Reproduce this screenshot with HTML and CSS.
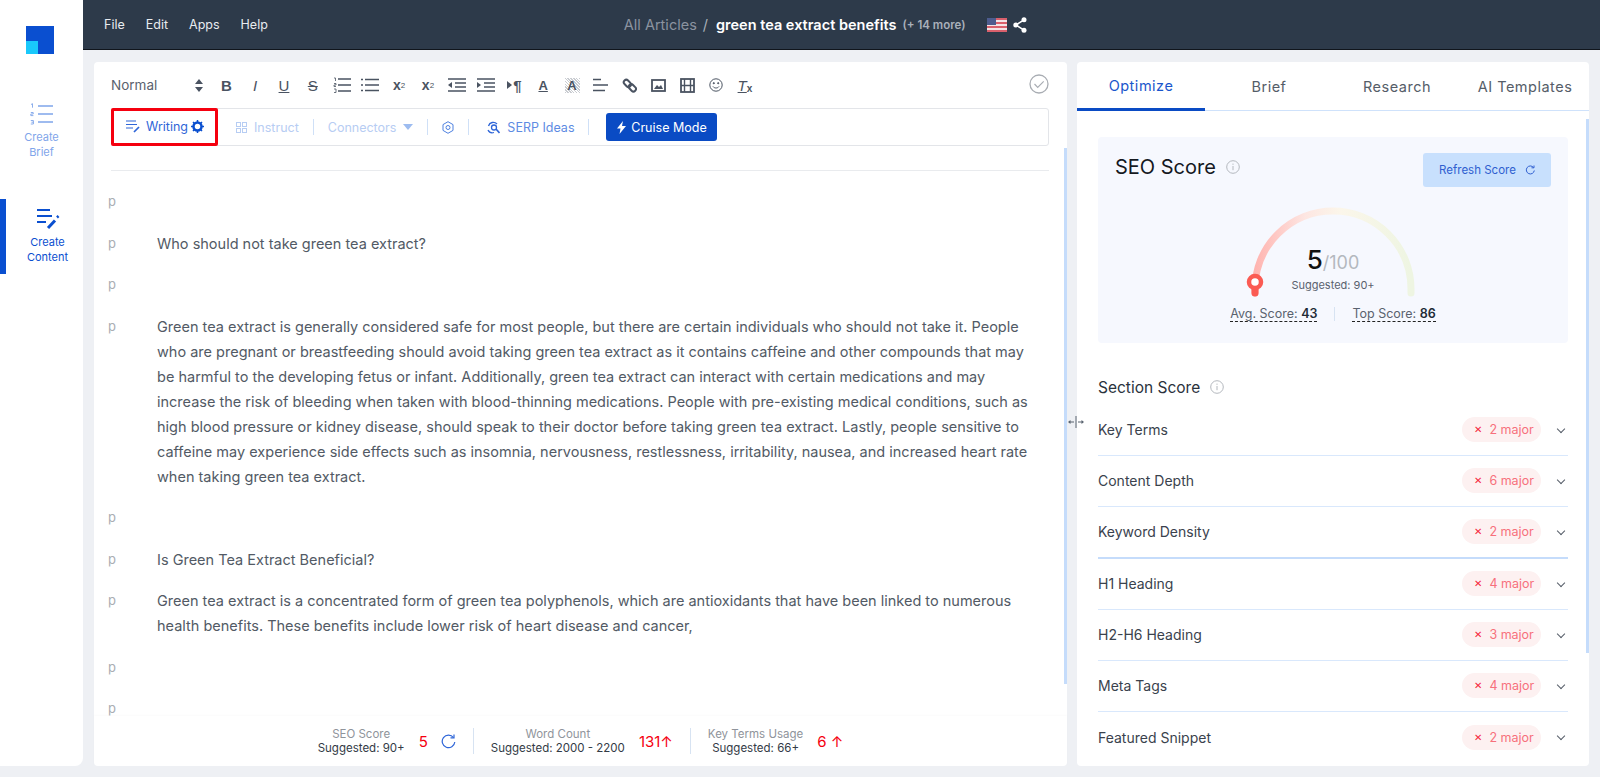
FILE: index.html
```html
<!DOCTYPE html>
<html>
	<head>
		<meta charset="UTF-8">
		<title>green tea extract benefits</title>
		<link rel="stylesheet" href="styles.css">
	</head>
	<body>
		<aside class="side">
			<svg class="logo" width="28" height="28" viewBox="0 0 28 28"><path d="M0 0h28v28H12V15H0z" fill="#0a4fd0"/><rect y="15" width="12" height="13" fill="#19c8fb"/></svg>
			<a class="side-item brief">
				<svg width="24" height="22" viewBox="0 0 24 22" fill="none" stroke="#7fa5ea" stroke-width="1.6"><path d="M8 3h15M8 11h15M8 19h15"/><path d="M1 1.5l1.5-.8v4M.8 9.5h2.4v1.5H.8v1.6h2.6M.8 17.5h2.6v3.5H.8M1.4 19.2h2" stroke-width=".9"/></svg>
				<span>Create<br>Brief</span>
			</a>
			<a class="side-item content">
				<svg width="24" height="22" viewBox="0 0 24 22" fill="none" stroke="#0a4fd0" stroke-width="1.8"><path d="M1 2h13M1 8h15M1 14h9"/><path d="M12 20l7-7.500" stroke-width="3"/><path d="M21 9.500l1.500-1.500" stroke-width="2.500"/></svg>
				<span>Create<br>Content</span>
			</a>
		</aside>
		<div class="main">
			<header class="top">
				<nav class="menu"><a>File</a><a>Edit</a><a>Apps</a><a>Help</a></nav>
				<div class="crumb">
					<span class="all">All Articles</span><span class="slash">/</span><b>green tea extract benefits</b><span class="more">(+ 14 more)</span>
					<svg class="flag" width="20" height="14" viewBox="0 0 20 14"><rect width="20" height="14" fill="#f3e4e6"/><path d="M0 1h20M0 5h20M0 9h20M0 13h20" stroke="#d9606c" stroke-width="1.900"/><rect width="9" height="7" fill="#4d5c8e"/></svg>
					<svg class="share" width="14" height="16" viewBox="0 0 14 16" fill="#fff"><circle cx="11" cy="2.800" r="2.500"/><circle cx="11" cy="13.200" r="2.500"/><circle cx="2.800" cy="8" r="2.500"/><path d="M2.800 8L11 2.800M2.800 8L11 13.200" stroke="#fff" stroke-width="1.500"/></svg>
				</div>
			</header>
			<div class="wrap">
				<section class="editor">
					<div class="tools">
						<span class="normal">Normal</span>
						<svg class="updown" width="8" height="13" viewBox="0 0 8 13" fill="#4a5361"><path d="M4 0l4 5H0zM4 13l4-5H0z"/></svg>
						<span class="tb t-b">B</span>
						<span class="tb t-i">I</span>
						<span class="tb t-u">U</span>
						<span class="tb t-s">S</span>
						<span class="tb gap"><svg width="18" height="16" viewBox="0 0 18 16" fill="none" stroke="#4a5361" stroke-width="1.700"><path d="M5 2h13M5 8h13M5 14h13"/><path d="M1 1h1.500v3M1 6.500h2v1.500H1v1.500h2M1 12h2v3.500H1" stroke-width=".8"/></svg></span>
						<span class="tb"><svg width="18" height="14" viewBox="0 0 18 14" fill="none" stroke="#4a5361" stroke-width="1.700"><path d="M4 1.500h14M4 7h14M4 12.500h14M0 1.500h2M0 7h2M0 12.500h2"/></svg></span>
						<span class="tb t-x">x<sub>2</sub></span>
						<span class="tb t-x">x<sup>2</sup></span>
						<span class="tb gap"><svg width="18" height="14" viewBox="0 0 18 14" fill="none" stroke="#4a5361" stroke-width="1.700"><path d="M0 1h18M7 5h11M7 9h11M0 13h18"/><path d="M4 4v6L0 7z" fill="#4a5361" stroke="none"/></svg></span>
						<span class="tb"><svg width="18" height="14" viewBox="0 0 18 14" fill="none" stroke="#4a5361" stroke-width="1.700"><path d="M0 1h18M7 5h11M7 9h11M0 13h18"/><path d="M0 4v6l4-3z" fill="#4a5361" stroke="none"/></svg></span>
						<span class="tb gap t-p"><svg width="5" height="8" viewBox="0 0 5 8" fill="#4a5361"><path d="M0 0l5 4-5 4z"/></svg>¶</span>
						<span class="tb gap t-a">A</span>
						<span class="tb t-bg">A</span>
						<span class="tb"><svg width="15" height="14" viewBox="0 0 15 14" fill="none" stroke="#4a5361" stroke-width="1.700"><path d="M0 1.500h8M0 7h15M0 12.500h12"/></svg></span>
						<span class="tb"><svg width="15" height="15" viewBox="0 0 15 15" fill="none" stroke="#4a5361" stroke-width="2"><rect x="-3.500" y="-2.500" width="8" height="5" rx="2.500" transform="translate(5 5) rotate(45)"/><rect x="-3.500" y="-2.500" width="8" height="5" rx="2.500" transform="translate(10 9.500) rotate(45)"/></svg></span>
						<span class="tb"><svg width="15" height="13" viewBox="0 0 15 13"><rect x="1" y="1" width="13" height="11" fill="none" stroke="#4a5361" stroke-width="1.800"/><path d="M3 10l3-4 2 2 2-2 2 4z" fill="#4a5361"/></svg></span>
						<span class="tb"><svg width="15" height="15" viewBox="0 0 15 15" fill="none" stroke="#4a5361" stroke-width="1.800"><rect x="1" y="1" width="13" height="13"/><path d="M4.500 1v13M10.500 1v13M1 7.500h13" stroke-width="1.400"/></svg></span>
						<span class="tb"><svg width="14" height="14" viewBox="0 0 14 14" fill="none" stroke="#4a5361"><circle cx="7" cy="7" r="6.200"/><path d="M4 8.500c1.500 2 4.500 2 6 0"/><circle cx="4.800" cy="5.200" r=".6" fill="#4a5361"/><circle cx="9.200" cy="5.200" r=".6" fill="#4a5361"/></svg></span>
						<span class="tb t-clear"><i>T</i><small>x</small></span>
						<svg class="done" width="20" height="20" viewBox="0 0 20 20" fill="none" stroke="#a9adb3" stroke-width="1.300"><circle cx="10" cy="10" r="9"/><path d="M5.500 10l3.200 3.300 6-6" stroke-width="1.200"/></svg>
					</div>
					<div class="modes">
						<div class="writing">
							<svg width="15" height="13" viewBox="0 0 15 13" fill="none" stroke="#2f66d8" stroke-width="1.200"><path d="M0 1h10M0 4.500h11M0 8h7"/><path d="M8 12l5-5" stroke-width="1.700"/></svg>
							<span>Writing</span>
							<svg width="13" height="13" viewBox="0 0 13 13" fill="none" stroke="#0a4fd0"><circle cx="6.500" cy="6.500" r="4" stroke-width="2.500"/><path d="M6.500 0v2M6.500 11v2M0 6.500h2M11 6.500h2M2 2l1.400 1.400M9.600 9.600L11 11M11 2L9.600 3.400M3.400 9.600L2 11" stroke-width="1.500"/></svg>
						</div>
						<span class="mode pale first"><svg width="11" height="11" viewBox="0 0 11 11" fill="none" stroke="#b7cdf3"><rect x=".5" y=".5" width="4" height="4"/><rect x="6.500" y=".5" width="4" height="4"/><rect x=".5" y="6.500" width="4" height="4"/><rect x="6.500" y="6.500" width="4" height="4"/></svg>Instruct</span>
						<i class="bar"></i>
						<span class="mode pale">Connectors<svg width="10" height="6" viewBox="0 0 10 6" fill="#9dbcf0"><path d="M0 0h10L5 6z"/></svg></span>
						<i class="bar"></i>
						<svg class="cog" width="12" height="13" viewBox="0 0 12 13" fill="none" stroke="#4d80e0"><path d="M6 .7l5 2.900v5.800l-5 2.900-5-2.900V3.600z"/><circle cx="6" cy="6.500" r="2"/></svg>
						<i class="bar"></i>
						<span class="mode serp"><svg width="13" height="13" viewBox="0 0 13 13" fill="none" stroke="#2f66d8" stroke-width="1.300"><path d="M10 3a5 5 0 0 0-8.500 2M1 9a5 5 0 0 0 6 2.500"/><path d="M9 8l3.500 4" stroke-width="1.600"/><circle cx="7" cy="6.500" r="2.500"/></svg>SERP Ideas</span>
						<i class="bar"></i>
						<a class="cruise"><svg width="9" height="13" viewBox="0 0 9 13" fill="#fff"><path d="M6 0L0 7.500h3.500L2.500 13 9 5H5z"/></svg>Cruise Mode</a>
					</div>
					<div class="rule"></div>
					<div class="doc">
						<div class="para"><span class="tag">p</span><p></p></div>
						<div class="para"><span class="tag">p</span><p>Who should not take green tea extract?</p></div>
						<div class="para"><span class="tag">p</span><p></p></div>
						<div class="para"><span class="tag">p</span><p>Green tea extract is generally considered safe for most people, but there are certain individuals who should not take it. People who are pregnant or breastfeeding should avoid taking green tea extract as it contains caffeine and other compounds that may be harmful to the developing fetus or infant. Additionally, green tea extract can interact with certain medications and may increase the risk of bleeding when taken with blood-thinning medications. People with pre-existing medical conditions, such as high blood pressure or kidney disease, should speak to their doctor before taking green tea extract. Lastly, people sensitive to caffeine may experience side effects such as insomnia, nervousness, restlessness, irritability, nausea, and increased heart rate when taking green tea extract.</p></div>
						<div class="para"><span class="tag">p</span><p></p></div>
						<div class="para"><span class="tag">p</span><p>Is Green Tea Extract Beneficial?</p></div>
						<div class="para"><span class="tag">p</span><p>Green tea extract is a concentrated form of green tea polyphenols, which are antioxidants that have been linked to numerous health benefits. These benefits include lower risk of heart disease and cancer,</p></div>
						<div class="para"><span class="tag">p</span><p></p></div>
						<div class="para"><span class="tag">p</span><p></p></div>
					</div>
					<footer class="stats">
						<div class="stat"><div class="lbl">SEO Score<b>Suggested: 90+</b></div><span class="val">5</span><svg class="reload" width="15" height="15" viewBox="0 0 15 15" fill="none" stroke="#2f66d8" stroke-width="1.200"><path d="M12.500 3.500A6.300 6.300 0 1 0 13.800 8"/><path d="M9.500 3.800h3.500V.5" /></svg></div>
						<div class="stat"><div class="lbl">Word Count<b>Suggested: 2000 - 2200</b></div><span class="val">131↑</span></div>
						<div class="stat"><div class="lbl">Key Terms Usage<b>Suggested: 66+</b></div><span class="val">6 ↑</span></div>
					</footer>
					<i class="scroll doc-scroll"></i>
				</section>
				<section class="panel">
					<div class="tabs"><a class="on">Optimize</a><a>Brief</a><a>Research</a><a>AI Templates</a></div>
					<div class="body">
						<div class="score">
							<div class="score-head">
								<h2>SEO Score<svg class="info" width="14" height="14" viewBox="0 0 14 14" fill="none" stroke="#b4b8be"><circle cx="7" cy="7" r="6.300"/><path d="M7 6v4.200M7 3.600v1.200"/></svg></h2>
								<a class="refresh">Refresh Score<svg width="10" height="10" viewBox="0 0 10 10" fill="none" stroke="#2f5fd0"><path d="M8.500 2.500a4 4 0 1 0 .8 3"/><path d="M6.500 2.800h2.500V.5"/></svg></a>
							</div>
							<div class="gauge">
								<svg width="176" height="96" viewBox="0 0 176 96" fill="none">
									<defs><linearGradient id="arc" x1="0" y1="0" x2="1" y2="0"><stop offset="0" stop-color="#ffb4b0"/><stop offset=".32" stop-color="#fde6e2"/><stop offset=".55" stop-color="#fbf6ea"/><stop offset="1" stop-color="#eef5e2"/></linearGradient></defs>
									<path d="M10 88V84A78 78 0 0 1 166 84V88" stroke="url(#arc)" stroke-width="7" stroke-linecap="round"/>
									<path d="M10 88V80" stroke="#fb5b53" stroke-width="7" stroke-linecap="round"/>
									<circle cx="10" cy="77" r="6" fill="#fff" stroke="#fb5b53" stroke-width="4.500"/>
								</svg>
								<div class="num"><b>5</b><span>/100</span></div>
								<div class="sug">Suggested: 90+</div>
							</div>
							<div class="avg"><span>Avg. Score: <b>43</b></span><i></i><span>Top Score: <b>86</b></span></div>
						</div>
						<h3>Section Score<svg class="info" width="14" height="14" viewBox="0 0 14 14" fill="none" stroke="#b4b8be"><circle cx="7" cy="7" r="6.300"/><path d="M7 6v4.200M7 3.600v1.200"/></svg></h3>
						<ul class="rows">
							<li><span>Key Terms</span><em>2 major</em></li>
							<li><span>Content Depth</span><em>6 major</em></li>
							<li class="strong"><span>Keyword Density</span><em>2 major</em></li>
							<li><span>H1 Heading</span><em>4 major</em></li>
							<li><span>H2-H6 Heading</span><em>3 major</em></li>
							<li><span>Meta Tags</span><em>4 major</em></li>
							<li><span>Featured Snippet</span><em>2 major</em></li>
						</ul>
					</div>
					<i class="scroll panel-scroll"></i>
				</section>
				<svg class="resize" width="16" height="12" viewBox="0 0 16 12" fill="none" stroke="#59636f"><path d="M8 0v12M1 6h5M10 6h5"/><path d="M0 6l2.500-2v4zM16 6l-2.500-2v4z" fill="#59636f" stroke="none"/></svg>
			</div>
		</div>
	</body>
</html>
```

FILE: styles.css
```css
*{
	box-sizing: border-box;
}
html,body{
	height: 100%;
}
body{
	margin: 0;
	background: #eef0f4;
	font-family: Inter, "Noto Sans", sans-serif;
	color: #4a5361;
	display: flex;
	overflow: hidden;
}
svg{
	flex: none;
}
/* left bar */
.side{
	width: 83px;
	height: 766px;
	background: #fff;
	border-radius: 0 0 8px 0;
	display: flex;
	flex-direction: column;
	flex: none;
	padding-top: 26px;
}
.logo{
	margin-left: 26px;
}
.side-item{
	display: flex;
	flex-direction: column;
	align-items: center;
	text-align: center;
	font-size: 11px;
	line-height: 15px;
}
.side-item span{
	margin-top: 5px;
}
.brief{
	color: #7fa5ea;
	margin-top: 49px;
	padding-right: 0;
}
.content{
	color: #0a4fd0;
	margin-top: 39px;
	height: 75px;
	padding: 9px 0 0 6px;
	border-left: 6px solid #0a4fd0;
}
/* top bar */
.main{
	flex: 1;
	min-width: 0;
	display: flex;
	flex-direction: column;
}
.top{
	height: 50px;
	background: #2d3a4a;
	border-bottom: 1px solid #10151c;
	display: flex;
	align-items: center;
	position: relative;
	padding-left: 21px;
	flex: none;
}
.menu{
	display: flex;
	gap: 21px;
	color: #e8ebef;
	font-size: 12.500px;
}
.crumb{
	margin-left: 356px;
	display: flex;
	align-items: center;
}
.all{
	color: #8b93a0;
	font-size: 14.500px;
}
.slash{
	color: #a9b0ba;
	margin: 0 8px 0 6px;
	font-size: 14.500px;
}
.crumb b{
	color: #fff;
	font-size: 14.500px;
	font-weight: 600;
}
.more{
	color: #a9b0ba;
	font-size: 11.500px;
	font-weight: 600;
	margin-left: 6px;
}
.flag{
	margin-left: 22px;
}
.share{
	margin-left: 6px;
}
/* layout under the bar */
.wrap{
	flex: 1;
	display: flex;
	gap: 10px;
	padding: 12px 11px 11px 11px;
	position: relative;
	min-height: 0;
}
.editor{
	width: 973px;
	background: #fff;
	border-radius: 4px;
	position: relative;
	padding: 0 18px 0 0;
	display: flex;
	flex-direction: column;
}
.tools{
	height: 46px;
	display: flex;
	align-items: center;
	padding-left: 17px;
	color: #4a5361;
	position: relative;
}
.normal{
	font-size: 13.500px;
	width: 84px;
	color: #5a626e;
}
.updown{
	margin-right: 9px;
}
.tb{
	width: 28.800px;
	height: 18px;
	display: flex;
	align-items: center;
	justify-content: center;
	font-size: 15px;
	font-family: "Liberation Sans", sans-serif;
	color: #4a5361;
	flex: none;
}
.t-b{
	font-weight: 700;
}
.t-i{
	font-style: italic;
}
.t-u{
	text-decoration: underline;
}
.t-s{
	text-decoration: line-through;
}
.t-x{
	font-weight: 700;
	font-size: 14px;
}
.t-x sub,.t-x sup{
	font-size: 8px;
	font-weight: 400;
}
.t-p{
	font-size: 15px;
	font-weight: 700;
	gap: 1px;
}
.t-a{
	font-size: 13px;
	font-weight: 700;
	text-decoration: underline;
}
.t-bg{
	font-size: 13px;
	font-weight: 700;
	background: repeating-linear-gradient(45deg,#c9ccd1 0 1px,#fff 1px 2px);
	width: 15px;
	height: 15px;
	margin: 0 7px;
}
.t-clear i{
	font-size: 15px;
	text-decoration: underline;
}
.t-clear small{
	font-size: 10px;
	font-weight: 700;
	margin-top: 6px;
}
.done{
	position: absolute;
	right: 0;
	top: 12px;
}
.modes{
	margin-left: 18px;
	height: 38px;
	border: 1px solid #e3e5e9;
	border-radius: 3px;
	display: flex;
	align-items: center;
	flex: none;
	font-size: 12.500px;
}
.writing{
	margin: -1px 0 0 -2px;
	width: 107px;
	height: 38px;
	border: 3px solid #f5000f;
	border-radius: 2px;
	display: flex;
	align-items: center;
	gap: 5px;
	padding-left: 12px;
	color: #2f66d8;
}
.writing svg:last-child{
	margin-left: -2px;
}
.mode{
	display: flex;
	align-items: center;
	gap: 7px;
}
.pale{
	color: #b7cdf3;
}
.first{
	margin-left: 18px;
}
.bar{
	width: 1px;
	height: 16px;
	background: #cfe0f7;
	margin: 0 14px;
}
.serp{
	color: #5e8be3;
	margin-left: 4px;
}
.cruise{
	background: #0a4bc4;
	color: #fff;
	height: 28px;
	width: 111px;
	border-radius: 3px;
	display: flex;
	align-items: center;
	justify-content: center;
	gap: 5px;
	margin-left: 3px;
}
.rule{
	margin: 24px 0 0 17px;
	height: 1px;
	background: #e9ebee;
	flex: none;
}
.doc{
	flex: 1;
	overflow: hidden;
	padding-top: 18px;
	font-size: 14.500px;
	line-height: 25px;
	color: #525a65;
}
.para{
	display: flex;
	margin-bottom: 16.500px;
}
.para p{
	margin: 0;
	width: 875px;
	min-height: 25px;
}
.tag{
	width: 63px;
	padding-left: 14px;
	font-size: 13px;
	color: #a9adb3;
	flex: none;
}
.stats{
	height: 50px;
	margin-right: -18px;
	display: flex;
	justify-content: center;
	align-items: center;
	box-shadow: 0 -1px 2px rgba(0,0,0,.02);
	flex: none;
}
.stat{
	display: flex;
	align-items: center;
	gap: 14px;
	padding: 0 17px;
	height: 26px;
	border-left: 1px solid #d7e3f2;
}
.stat:first-child{
	border-left: 0;
}
.lbl{
	font-size: 11.500px;
	line-height: 14px;
	color: #8f949b;
	text-align: center;
}
.lbl b{
	display: block;
	color: #333b46;
	font-weight: 400;
}
.val{
	color: #f5000f;
	font-size: 15px;
}
.reload{
	margin-left: -1px;
}
.scroll{
	position: absolute;
	width: 3px;
	background: #c5dcfb;
}
.doc-scroll{
	right: 0;
	top: 86px;
	height: 536px;
}
/* right panel */
.panel{
	width: 512px;
	background: #fff;
	border-radius: 4px;
	position: relative;
	display: flex;
	flex-direction: column;
	min-height: 0;
}
.tabs{
	height: 49px;
	display: grid;
	grid-template-columns: repeat(4,1fr);
	border-bottom: 1px solid #cfe2fb;
	flex: none;
}
.tabs a{
	display: flex;
	align-items: center;
	justify-content: center;
	font-size: 14.500px;
	letter-spacing: .5px;
	color: #555d68;
	height: 49px;
}
.tabs .on{
	color: #1a56cc;
	border-bottom: 3px solid #0a4bc4;
}
.body{
	padding: 26px 21px 0 21px;
	flex: 1;
	min-height: 0;
	overflow: hidden;
}
.score{
	height: 206px;
	background: #f6f8fe;
	border-radius: 4px;
	padding: 16px 17px 0 17px;
}
.score-head{
	display: flex;
	justify-content: space-between;
}
.score h2{
	margin: 0;
	font-size: 20px;
	font-weight: 400;
	color: #15191f;
	display: flex;
	align-items: center;
	gap: 10px;
	height: 28px;
}
.refresh{
	width: 128px;
	height: 34px;
	background: #c8e0fd;
	border-radius: 3px;
	color: #2f5fd0;
	font-size: 11.500px;
	display: flex;
	align-items: center;
	justify-content: center;
	gap: 9px;
}
.gauge{
	width: 176px;
	height: 96px;
	margin: 18px auto 0;
	position: relative;
	text-align: center;
}
.gauge svg{
	position: absolute;
	left: 0;
	top: 0;
}
.num{
	padding-top: 40px;
	line-height: 30px;
	position: relative;
}
.num b{
	font-size: 26px;
	font-weight: 500;
	color: #111;
}
.num span{
	font-size: 18px;
	color: #b4b8be;
}
.sug{
	font-size: 11px;
	color: #5a626e;
	line-height: 14px;
	position: relative;
}
.avg{
	display: flex;
	justify-content: center;
	align-items: center;
	gap: 17px;
	font-size: 12.500px;
	color: #5a626e;
	margin-top: 5px;
}
.avg span{
	border-bottom: 1px dashed #222;
	line-height: 15px;
}
.avg b{
	color: #222b36;
	font-weight: 600;
}
.avg i{
	width: 1px;
	height: 14px;
	background: #d7e3f2;
}
.body h3{
	margin: 32px 0 0;
	font-size: 15.500px;
	font-weight: 400;
	color: #2a323c;
	display: flex;
	align-items: center;
	gap: 10px;
	height: 24px;
}
.rows{
	list-style: none;
	margin: 6px 0 0;
	padding: 0;
}
.rows li{
	height: 51.200px;
	display: flex;
	align-items: center;
	justify-content: space-between;
	border-bottom: 1px solid #d9e8fc;
	padding-bottom: 1px;
	font-size: 14px;
	color: #3a424d;
	position: relative;
}
.rows li.strong{
	border-bottom: 2px solid #c5dcfb;
}
.rows li:last-child{
	border-bottom: 0;
}
.rows em{
	font-style: normal;
	width: 79px;
	height: 25px;
	border-radius: 13px;
	background: #fdf1f1;
	color: #f7707c;
	font-size: 12.500px;
	display: flex;
	align-items: center;
	padding-left: 12px;
	gap: 7px;
	margin-right: 27px;
}
.rows em::before{
	content: "✕";
	color: #f5283c;
	font-size: 10px;
	font-family: "DejaVu Sans", sans-serif;
}
.rows li::after{
	content: "";
	position: absolute;
	right: 4px;
	top: 21px;
	width: 5px;
	height: 5px;
	border-right: 1px solid #555d68;
	border-bottom: 1px solid #555d68;
	transform: rotate(45deg);
}
.panel-scroll{
	right: 0;
	top: 57px;
	height: 534px;
}
.resize{
	position: absolute;
	left: 985px;
	top: 366px;
}
```
